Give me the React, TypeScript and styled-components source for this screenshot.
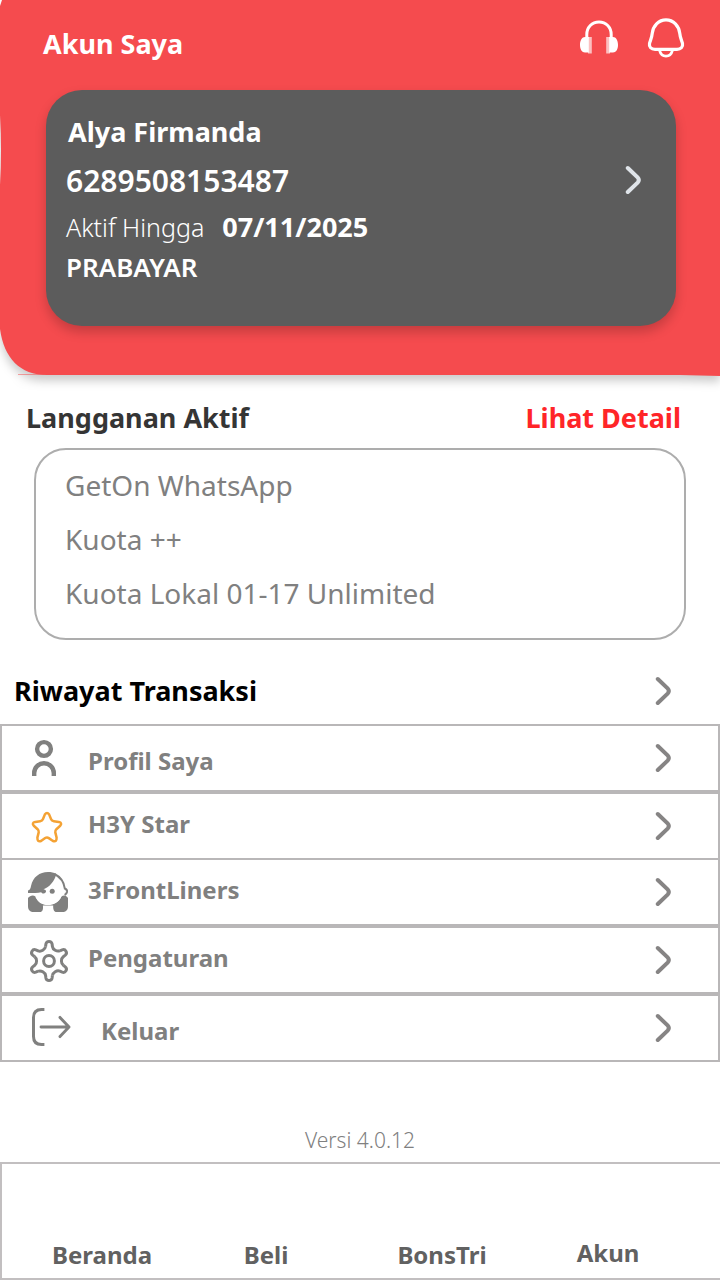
import React from 'react';
import styled, { createGlobalStyle } from 'styled-components';

const GlobalStyle = createGlobalStyle`
  *, *::before, *::after { box-sizing: border-box; }
  body {
    margin: 0;
    background: #ffffff;
    font-family: 'Noto Sans', 'Open Sans', sans-serif;
  }
  h1, h2, p, ul { margin: 0; padding: 0; }
  ul { list-style: none; }
  a { color: inherit; text-decoration: none; }
  button { padding: 0; border: 0; background: none; font: inherit; cursor: pointer; }
  svg { display: block; flex: none; }
`;

const Page = styled.div`
  display: flex;
  flex-direction: column;
  min-height: 100vh;
`;

const Header = styled.header`
  position: relative;
  padding-bottom: 49px;
`;

const HeaderShape = styled.svg`
  position: absolute;
  inset: 0;
  z-index: -1;
  width: 100%;
  height: 100%;
  overflow: visible;
  filter: drop-shadow(0 6px 5px rgba(0, 0, 0, 0.2));
`;

const TopBar = styled.div`
  display: flex;
  align-items: center;
  justify-content: space-between;
  height: 90px;
  padding: 0 34px 2px 43px;
  color: #ffffff;
`;

const PageTitle = styled.h1`
  font-size: 27px;
  line-height: 40px;
  font-weight: 700;
`;

const TopActions = styled.div`
  display: flex;
  gap: 27px;
  padding-bottom: 12px;
`;

const IconButton = styled.button`
  color: inherit;
`;

const AccountCard = styled.section`
  display: flex;
  align-items: flex-start;
  justify-content: space-between;
  margin: 0 44px 0 46px;
  padding: 18px 33px 40px 20px;
  border-radius: 36px;
  background: #5c5c5c;
  color: #ffffff;
  box-shadow: 0 6px 12px rgba(0, 0, 0, 0.2);
`;

const AccountName = styled.h2`
  padding-left: 2px;
  font-size: 27px;
  line-height: 48px;
  font-weight: 700;
`;

const PhoneNumber = styled.p`
  font-size: 30px;
  line-height: 50px;
  font-weight: 600;
`;

const Validity = styled.p`
  display: flex;
  gap: 18px;
  font-size: 25px;
  line-height: 42px;
  font-weight: 300;

  time { font-size: 27px; font-weight: 700; }
`;

const PlanType = styled.p`
  font-size: 26px;
  line-height: 38px;
  font-weight: 600;
`;

const CardButton = styled.button`
  margin-top: 57px;
  color: #dfe4e9;
`;

const SectionHead = styled.div`
  display: flex;
  justify-content: space-between;
  padding: 25px 39px 12px 26px;
`;

const SectionTitle = styled.h2`
  font-size: 27px;
  line-height: 36px;
  font-weight: 700;
  color: #353535;
`;

const DetailLink = styled.a`
  font-size: 27px;
  line-height: 36px;
  font-weight: 700;
  color: #ff2528;
`;

const PlanList = styled.ul`
  margin: 0 34px;
  padding: 8px 28px 18px 29px;
  border: 2px solid #adadad;
  border-radius: 32px;
`;

const PlanItem = styled.li`
  font-size: 28px;
  line-height: 54px;
  color: #808080;
`;

const HistoryLink = styled.a`
  display: flex;
  align-items: center;
  justify-content: space-between;
  padding: 18px 47px 0 14px;
  font-size: 27px;
  line-height: 66px;
  font-weight: 700;
  color: #000000;
`;

const MenuRow = styled.li<{ $joined?: boolean }>`
  margin-top: ${(p) => (p.$joined ? '-2px' : '0')};
  border: 2px solid #b9b7b8;
`;

const MenuLink = styled.a`
  display: flex;
  align-items: center;
  height: 64px;
  padding: 0 45px 0 22px;
  color: #80807f;
`;

const MenuLabel = styled.span<{ $low?: boolean }>`
  flex: 1;
  padding: ${(p) => (p.$low ? '6px 0 0 16px' : '0 0 4px 16px')};
  font-size: 24px;
  line-height: 32px;
  font-weight: 700;
`;

const Version = styled.p`
  padding: 62px 0 6px;
  text-align: center;
  font-size: 21px;
  line-height: 32px;
  font-weight: 300;
  color: #808080;
`;

const TabBar = styled.nav`
  display: grid;
  grid-template-columns: 168fr 160fr 192fr 140fr;
  padding: 76px 42px 8px 16px;
  border: 2px solid #c2bfc0;
  border-right: 0;
`;

const TabLink = styled.a<{ $active?: boolean }>`
  margin-top: ${(p) => (p.$active ? '-2px' : '0')};
  text-align: center;
  font-size: 24px;
  line-height: 30px;
  font-weight: 700;
  color: #616161;
`;

const ChevronSvg = styled.svg<{ $color?: string }>`
  color: ${(p) => p.$color || '#868484'};
`;

const Chevron = ({ color }: { color?: string }) => (
  <ChevronSvg $color={color} width="18" height="30" viewBox="0 0 18 30" fill="none" aria-hidden="true">
    <path d="M2.8 3L12.6 12.4Q15 15 12.6 17.6L2.8 27" stroke="currentColor" strokeWidth="4" strokeLinecap="round" />
  </ChevronSvg>
);

const HeadphonesIcon = () => (
  <svg width="40" height="40" viewBox="0 0 40 40" fill="none" aria-hidden="true">
    <path d="M7.8 21V16.5C7.8 9 13 4 20 4S32.2 9 32.2 16.5V21" stroke="#fff" strokeWidth="3" />
    <path d="M6 19H9.8V34.5H6C3 34.5 1 31.5 1 27S3 19 6 19ZM34 19H30.2V34.5H34C37 34.5 39 31.5 39 27S37 19 34 19Z" fill="#fff" />
    <path d="M9 19H12.8V35.5H9ZM31 19H27.2V35.5H31Z" fill="#fff" fillOpacity="0.65" />
  </svg>
);

const BellIcon = () => (
  <svg width="40" height="40" viewBox="0 0 40 40" fill="none" stroke="#fff" strokeWidth="3.2" aria-hidden="true">
    <path d="M20 1.9C12.5 1.9 7 8 6.2 15.5C5.8 20 4.3 22.5 3.5 25.5C2.8 29 5.2 31.4 9 31.4H31C34.8 31.4 37.2 29 36.5 25.5C35.7 22.5 34.2 20 33.8 15.5C33 8 27.5 1.9 20 1.9Z" />
    <path d="M13.6 32.5C14.6 36.4 17 38.2 20 38.2S25.4 36.4 26.4 32.5" strokeWidth="2.8" />
  </svg>
);

const PersonIcon = () => (
  <svg width="48" height="48" viewBox="0 0 48 48" fill="none" stroke="currentColor" strokeWidth="4.4" aria-hidden="true">
    <circle cx="20" cy="15" r="6.9" />
    <path d="M10.2 42V39A9.8 9.8 0 0 1 29.8 39V42" />
  </svg>
);

const StarIcon = () => (
  <svg width="48" height="48" viewBox="0 0 48 48" fill="none" aria-hidden="true">
    <path
      d="M20.8 12.6Q23 9.6 25.2 12.6L27.1 17.3Q27.8 19 29.8 19.2L34.8 19.9Q38.6 20.8 36.2 23.8L32.4 27.2Q31 28.6 31.3 30.4L32.6 35.6Q32.8 40.4 29 39L24.8 36.1Q23 34.8 21.2 36.1L17 39Q13.2 40.4 13.4 35.6L14.7 30.4Q15 28.6 13.6 27.2L9.8 23.8Q7.4 20.8 11.2 19.9L16.2 19.2Q18.2 19 18.9 17.3Z"
      stroke="#f4a234" strokeWidth="2.5" strokeLinejoin="round"
    />
  </svg>
);

const AgentIcon = () => (
  <svg width="48" height="48" viewBox="0 0 48 48" fill="none" aria-hidden="true">
    <path d="M4 25V22.5C6 22 6.5 20.5 7 18C9 9 15.5 4 24 4C27 4 30 4.6 32.3 6C30.5 13.5 25.5 19 19.5 21.2C22 21.5 22.6 23 21.6 24.6C20.2 26 18 25.6 17.2 24.2C14 25.2 9 24.8 4 25Z" fill="currentColor" />
    <path d="M30.5 6C36.5 9 40 14 40.8 20.5Q43.4 21.5 43 24Q42.6 26 40.6 27" stroke="currentColor" strokeWidth="2" />
    <circle cx="28.2" cy="23.2" r="2.5" fill="currentColor" />
    <path d="M4 30C6 27.5 9 26.6 11.4 28.4C13.5 34 18 37 24 37C30 37 35.5 33.6 37.4 28.4C40 26.6 42.5 27.5 44 30V38C44 42 42 44 38 44H32.5C30 44 29 41.5 29.2 37.5H18.9C19.4 41.5 18.5 44 16 44H10C6 44 4 42 4 38Z" fill="currentColor" />
    <path d="M36.5 19C38 22 37.8 27 36 30C33 34.4 29 36 24 36S14.8 33.6 12 28.6" stroke="#fff" strokeWidth="1.2" />
  </svg>
);

const GearIcon = () => (
  <svg width="48" height="48" viewBox="0 0 48 48" fill="none" stroke="currentColor" strokeWidth="3" aria-hidden="true">
    <g transform="translate(25 25)">
      {[0, 60, 120, 180, 240, 300].map((angle) => (
        <path
          key={angle}
          transform={`rotate(${angle})`}
          d="M-3.4 -14.5L-3.1 -17Q-2.6 -19.6 0 -19.6T3.1 -17L3.4 -14.5C3.8 -11.4 8 -9 10.9 -10.3"
        />
      ))}
      <circle r="5.4" />
    </g>
  </svg>
);

const ExitIcon = () => (
  <svg width="61" height="48" viewBox="0 0 61 48" fill="none" stroke="currentColor" aria-hidden="true">
    <path d="M20.4 5.4H17.5Q9.5 5.4 9.5 13.4V32.6Q9.5 40.6 17.5 40.6H20.4" strokeWidth="3" />
    <path d="M17 23H44M36 13.4L45 23L36 32.6" strokeWidth="2.9" strokeLinecap="round" strokeLinejoin="round" />
  </svg>
);

const plans = ['GetOn WhatsApp', 'Kuota ++', 'Kuota Lokal 01-17 Unlimited'];

const menu = [
  { label: 'Profil Saya', Icon: PersonIcon, low: true },
  { label: 'H3Y Star', Icon: StarIcon },
  { label: '3FrontLiners', Icon: AgentIcon, joined: true },
  { label: 'Pengaturan', Icon: GearIcon },
  { label: 'Keluar', Icon: ExitIcon, low: true },
];

const tabs = ['Beranda', 'Beli', 'BonsTri', 'Akun'];

export default function App() {
  return (
    <Page>
      <GlobalStyle />
      <Header>
        <HeaderShape viewBox="0 0 720 375" preserveAspectRatio="none" aria-hidden="true">
          <path
            d="M2 0H720V376L680 375H47C20 375 4 358 0 329V185Q2 150 0 115V6Z"
            fill="#f54b4e"
          />
          <path d="M18 374.5H50" stroke="#f54b4e" strokeOpacity="0.5" />
        </HeaderShape>
        <TopBar>
          <PageTitle>Akun Saya</PageTitle>
          <TopActions>
            <IconButton type="button" aria-label="Bantuan"><HeadphonesIcon /></IconButton>
            <IconButton type="button" aria-label="Notifikasi"><BellIcon /></IconButton>
          </TopActions>
        </TopBar>
        <AccountCard>
          <div>
            <AccountName>Alya Firmanda</AccountName>
            <PhoneNumber>6289508153487</PhoneNumber>
            <Validity>
              <span>Aktif Hingga</span>
              <time dateTime="2025-11-07">07/11/2025</time>
            </Validity>
            <PlanType>PRABAYAR</PlanType>
          </div>
          <CardButton type="button" aria-label="Detail akun"><Chevron color="#dfe4e9" /></CardButton>
        </AccountCard>
      </Header>

      <main>
        <SectionHead>
          <SectionTitle>Langganan Aktif</SectionTitle>
          <DetailLink href="#langganan">Lihat Detail</DetailLink>
        </SectionHead>
        <PlanList>
          {plans.map((plan) => <PlanItem key={plan}>{plan}</PlanItem>)}
        </PlanList>
        <HistoryLink href="#riwayat">
          Riwayat Transaksi
          <Chevron />
        </HistoryLink>
        <ul>
          {menu.map(({ label, Icon, low, joined }) => (
            <MenuRow key={label} $joined={joined}>
              <MenuLink href={`#${label}`}>
                <Icon />
                <MenuLabel $low={low}>{label}</MenuLabel>
                <Chevron />
              </MenuLink>
            </MenuRow>
          ))}
        </ul>
        <Version>Versi 4.0.12</Version>
      </main>

      <TabBar>
        {tabs.map((tab) => (
          <TabLink key={tab} href={`#${tab}`} $active={tab === 'Akun'}>{tab}</TabLink>
        ))}
      </TabBar>
    </Page>
  );
}
